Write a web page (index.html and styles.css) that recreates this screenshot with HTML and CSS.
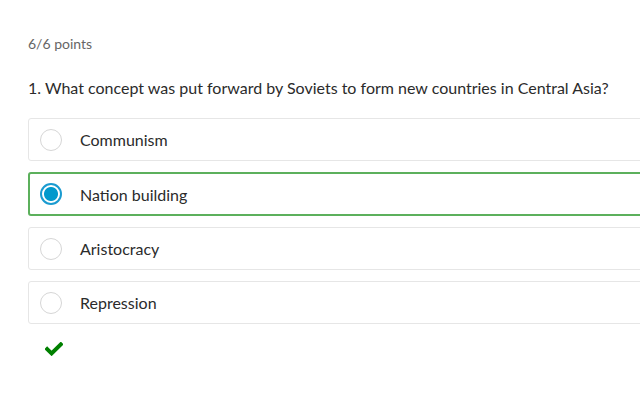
FILE: index.html
```html
<!DOCTYPE html>
<html>
<head>
<meta charset="utf-8">
<link rel="stylesheet" href="styles.css">
</head>
<body>
<div class="page">
  <div class="points">6/6 points</div>
  <div class="question">1. What concept was put forward by Soviets to form new countries in Central Asia?</div>
  <div class="options">
    <div class="option"><span class="radio"></span><span class="label">Communism</span></div>
    <div class="option selected"><span class="radio checked"></span><span class="label">Nation building</span></div>
    <div class="option"><span class="radio"></span><span class="label">Aristocracy</span></div>
    <div class="option"><span class="radio"></span><span class="label">Repression</span></div>
  </div>
  <div class="result">
    <svg width="18" height="14" viewBox="0 0 18 14"><path d="M2.2 7.2 L6.6 11.4 L15.8 2.4" fill="none" stroke="#008000" stroke-width="4" stroke-linecap="square" stroke-linejoin="miter"/></svg>
  </div>
</div>
</body>
</html>
```
FILE: styles.css
```css
html, body {
  margin: 0;
  padding: 0;
  background: #fff;
  overflow: hidden;
}
body {
  font-family: Lato, "Open Sans", sans-serif;
  color: #333;
  width: 640px;
  height: 400px;
}
.page {
  padding: 35px 0 0 28px;
  width: 700px;
}
.points {
  font-size: 14px;
  color: #666;
  line-height: 18px;
}
.question {
  font-size: 16px;
  line-height: 22px;
  margin-top: 24px;
  white-space: nowrap;
  color: #2b2b2b;
}
.options {
  margin-top: 19px;
  display: flex;
  flex-direction: column;
  gap: 11px;
}
.option {
  display: flex;
  align-items: center;
  height: 41px;
  border: 1px solid #e6e6e6;
  border-radius: 3px;
  padding-left: 11px;
}
.option.selected {
  border: 2px solid #5cb05c;
  padding-left: 10px;
  height: 40px;
}
.radio {
  width: 20px;
  height: 20px;
  border: 1px solid #d6d6d6;
  border-radius: 50%;
  box-sizing: content-box;
  flex: none;
}
.radio.checked {
  border: 2px solid #1a9bd0;
  width: 18px;
  height: 18px;
  background: radial-gradient(circle, #0099cc 0 6.5px, #fff 7.5px);
}
.label {
  margin-left: 18px;
  font-size: 16px;
  color: #2b2b2b;
}
.result {
  padding: 18px 0 0 17px;
  height: 20px;
}
.result svg {
  display: block;
}
```
